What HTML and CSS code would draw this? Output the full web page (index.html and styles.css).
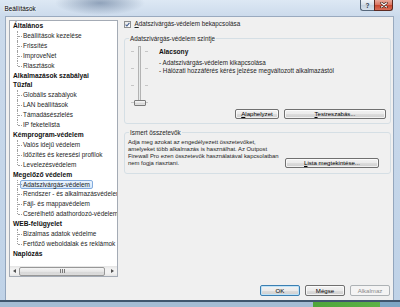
FILE: index.html
```html
<!DOCTYPE html>
<html lang="hu">
<head>
    <meta charset="UTF-8">
    <title>Beállítások</title>
    <link rel="stylesheet" href="styles.css">
</head>
<body>
<div class="window">
    <div class="titlebar">
        <span class="title">Beállítások</span>
        <div class="caption-buttons">
            <span class="cap help">?</span>
            <span class="cap close">
                <svg width="8" height="6" viewBox="0 0 8 6">
                    <path d="M1.5 1 L6.5 5 M6.5 1 L1.5 5" stroke="#3b1d17" stroke-width="2.4" stroke-linecap="round"/>
                    <path d="M1.5 1 L6.5 5 M6.5 1 L1.5 5" stroke="#ffffff" stroke-width="1.2" stroke-linecap="round"/>
                </svg>
            </span>
        </div>
    </div>

    <div class="client">
        <div class="main">
            <div class="tree-box">
                <ul class="tree">
                    <li class="cat"><span class="name">Általános</span>
                        <ul class="sub">
                            <li>Beállítások kezelése</li>
                            <li>Frissítés</li>
                            <li>ImproveNet</li>
                            <li>Riasztások</li>
                        </ul>
                    </li>
                    <li class="cat"><span class="name">Alkalmazások szabályai</span></li>
                    <li class="cat"><span class="name">Tűzfal</span>
                        <ul class="sub">
                            <li>Globális szabályok</li>
                            <li>LAN beállítások</li>
                            <li>Támadásészlelés</li>
                            <li>IP feketelista</li>
                        </ul>
                    </li>
                    <li class="cat"><span class="name">Kémprogram-védelem</span>
                        <ul class="sub">
                            <li>Valós idejű védelem</li>
                            <li>Időzítés és keresési profilok</li>
                            <li>Levelezésvédelem</li>
                        </ul>
                    </li>
                    <li class="cat"><span class="name">Megelőző védelem</span>
                        <ul class="sub">
                            <li><span class="selected">Adatszivárgás-védelem</span></li>
                            <li>Rendszer - és alkalmazásvédelem</li>
                            <li>Fájl- és mappavédelem</li>
                            <li>Cserélhető adathordozó-védelem</li>
                        </ul>
                    </li>
                    <li class="cat"><span class="name">WEB-felügyelet</span>
                        <ul class="sub">
                            <li>Bizalmas adatok védelme</li>
                            <li>Fertőző weboldalak és reklámok</li>
                        </ul>
                    </li>
                    <li class="cat"><span class="name">Naplózás</span></li>
                </ul>
                <div class="hscroll">
                    <span class="arrow"><i class="tri-left"></i></span>
                    <span class="thumb"><i class="grip"></i></span>
                    <span class="track-rest"></span>
                    <span class="arrow"><i class="tri-right"></i></span>
                </div>
            </div>

            <div class="panel">
                <label class="check-row">
                    <span class="checkbox">
                        <svg width="5" height="5" viewBox="0 0 5 5">
                            <path d="M0.6 2.6 L1.9 4 L4.4 0.8" fill="none" stroke="#3f5a8c" stroke-width="1.1"/>
                        </svg>
                    </span>
                    <span><u>A</u>datszivárgás-védelem bekapcsolása</span>
                </label>

                <fieldset class="group level">
                    <legend>Adatszivárgás-védelem szintje</legend>
                    <div class="level-body">
                        <div class="slider">
                            <div class="ticks"><i></i><i></i><i></i><i></i></div>
                            <div class="track"></div>
                            <div class="ticks"><i></i><i></i><i></i><i></i></div>
                            <span class="slider-thumb"></span>
                        </div>
                        <div class="level-text">
                            <div class="level-name">Alacsony</div>
                            <p class="level-desc">
                                - Adatszivárgás-védelem kikapcsolása<br>
                                - Hálózati hozzáférés kérés jelzése megváltozott alkalmazástól
                            </p>
                        </div>
                    </div>
                    <div class="group-buttons">
                        <button class="btn btn-reset"><u>A</u>laphelyzet</button>
                        <button class="btn btn-custom"><u>T</u>estreszabás...</button>
                    </div>
                </fieldset>

                <fieldset class="group known">
                    <legend>Ismert összetevők</legend>
                    <div class="known-body">
                        <p class="known-text">
                            Adja meg azokat az engedélyezett összetevőket,<br>
                            amelyeket több alkalmazás is használhat. Az Outpost<br>
                            Firewall Pro ezen összetevők használatával kapcsolatban<br>
                            nem fogja riasztani.
                        </p>
                        <button class="btn btn-list"><u>L</u>ista megtekintése...</button>
                    </div>
                </fieldset>
            </div>
        </div>

        <div class="footer">
            <button class="btn btn-footer btn-default">OK</button>
            <button class="btn btn-footer">Mégse</button>
            <button class="btn btn-footer" disabled>Alkalmaz</button>
        </div>
    </div>

    <div class="frame-bottom"></div>
</div>
</body>
</html>
```

FILE: styles.css
```css
:root {
    --text: #1e1e1e;
    --client-bg: #f0f0f0;
    --group-border: #d5dfe5;
    --tree-line: #a0a0a0;
}

* {
    box-sizing: border-box;
}

body {
    margin: 0;
    font-family: "Liberation Sans", Arial, sans-serif;
    font-size: 6.3px;
    color: var(--text);
}

.window {
    width: 400px;
    height: 307px;
    display: flex;
    flex-direction: column;
    overflow: hidden;
    background:
        radial-gradient(ellipse 45px 12px at 100px 3px, rgba(70, 95, 130, 0.5), rgba(70, 95, 130, 0)),
        linear-gradient(to bottom, #dde8f4 0, #cbdaeb 17px, #bfd2e7 100%);
}

/* title bar */

.titlebar {
    height: 17px;
    display: flex;
    align-items: flex-start;
}

.title {
    padding: 4.5px 0 0 4.5px;
    line-height: 7px;
    font-size: 6.4px;
    color: #000;
    text-shadow: 0 0 3px #fff, 0 0 2px #fff;
}

.caption-buttons {
    margin-left: auto;
    margin-right: 7px;
    display: flex;
}

.cap {
    height: 11px;
    display: flex;
    align-items: center;
    justify-content: center;
    border: 1px solid #56677b;
    border-top: none;
}

.help {
    width: 14px;
    border-right: none;
    border-radius: 0 0 0 3px;
    background: linear-gradient(to bottom, #eef3f8, #d3dee9 50%, #c3d1df 50%, #d6e1ec);
    color: #2b3a4d;
    font-weight: bold;
    font-size: 6.5px;
}

.close {
    width: 19px;
    border-color: #5c2a22;
    border-radius: 0 0 3px 0;
    background: linear-gradient(to bottom, #e9a99b, #d9725f 50%, #c7442c 50%, #d9705a);
}

/* client area */

.client {
    flex: 1;
    margin: 0 7px 0 6px;
    padding: 3px 2px 4px 3px;
    background: var(--client-bg);
    box-shadow: 0 0 0 1px rgba(60, 80, 110, 0.35);
    display: flex;
    flex-direction: column;
}

.main {
    display: flex;
    gap: 6px;
    height: 257px;
}

/* tree */

.tree-box {
    width: 109px;
    flex-shrink: 0;
    border: 1px solid #a4abb5;
    background: #fff;
    display: flex;
    flex-direction: column;
}

.tree {
    flex: 1;
    margin: 0;
    padding: 0 0 0 3px;
    list-style: none;
    overflow: hidden;
    white-space: nowrap;
    font-size: 6.45px;
    line-height: 9.9px;
}

.cat .name {
    font-weight: bold;
    font-size: 6.7px;
    color: #111;
}

.sub {
    list-style: none;
    margin: 0;
    padding: 0;
}

.sub li {
    position: relative;
    padding-left: 10px;
}

.sub li::before {
    content: "";
    position: absolute;
    left: 4px;
    top: 0;
    bottom: 0;
    border-left: 1px dotted var(--tree-line);
}

.sub li:last-child::before {
    bottom: 50%;
}

.sub li::after {
    content: "";
    position: absolute;
    left: 5px;
    top: 50%;
    width: 4px;
    border-top: 1px dotted var(--tree-line);
}

.selected {
    display: inline-block;
    margin-left: -3px;
    padding: 0 2px;
    line-height: 7.5px;
    border: 1px solid #84acdd;
    border-radius: 2px;
    background: linear-gradient(to bottom, #ebf4fd, #d5e7fb);
}

.hscroll {
    height: 10px;
    display: flex;
    background: linear-gradient(to bottom, #e4e4e4, #f2f2f2 30%, #f2f2f2 70%, #e4e4e4);
}

.arrow {
    width: 9px;
    display: flex;
    align-items: center;
    justify-content: center;
}

.tri-left,
.tri-right {
    width: 0;
    height: 0;
    border-top: 2.5px solid transparent;
    border-bottom: 2.5px solid transparent;
}

.tri-left {
    border-right: 3px solid #505050;
}

.tri-right {
    border-left: 3px solid #505050;
}

.thumb {
    width: 86px;
    margin: 0.5px 0;
    border: 1px solid #979797;
    border-radius: 2px;
    background: linear-gradient(to bottom, #f5f5f5, #e6e6e6 50%, #d8d8d8 50%, #dcdcdc);
    display: flex;
    align-items: center;
    justify-content: center;
}

.grip {
    width: 5px;
    height: 4px;
    background: repeating-linear-gradient(to right, #7a7a7a 0 1px, transparent 1px 2px);
}

.track-rest {
    flex: 1;
}

/* right panel */

.panel {
    flex: 1;
    display: flex;
    flex-direction: column;
}

.check-row {
    display: flex;
    align-items: center;
    gap: 3.5px;
    height: 8px;
    line-height: 8px;
}

.checkbox {
    width: 7px;
    height: 7px;
    border: 1px solid #8e8f8f;
    background: linear-gradient(to bottom right, #e6e6e6, #ffffff);
    display: flex;
    align-items: center;
    justify-content: center;
}

.group {
    margin: 0;
    padding: 0;
    min-inline-size: 0;
    border: 1px solid var(--group-border);
    border-radius: 3px;
}

.group legend {
    margin-left: 4px;
    padding: 0 1px;
    line-height: 7px;
}

.level {
    margin-top: 6.5px;
}

.level-body {
    display: flex;
    padding: 4.5px 0 0 6px;
}

.slider {
    position: relative;
    display: flex;
    gap: 4px;
    height: 61px;
}

.ticks {
    width: 3px;
    padding: 5px 0 4px;
    display: flex;
    flex-direction: column;
    justify-content: space-between;
}

.ticks i {
    height: 1px;
    background: #c6c6c6;
}

.track {
    width: 3px;
    height: 57px;
    border: 1px solid #b3b3b3;
    background: #e7eaea;
}

.slider-thumb {
    position: absolute;
    left: 3px;
    top: 54px;
    width: 12px;
    height: 6px;
    border: 1px solid #7a7a7a;
    border-radius: 1px;
    background: linear-gradient(to bottom, #f7f7f7, #e3e3e3 50%, #d5d5d5 50%, #e2e2e2);
}

.level-text {
    margin-left: 11px;
    padding-top: 0.5px;
    white-space: nowrap;
}

.level-name {
    font-weight: bold;
    font-size: 6.6px;
    line-height: 9px;
    color: #111;
}

.level-desc {
    margin: 3.5px 0 0;
    line-height: 8px;
}

.group-buttons {
    display: flex;
    justify-content: flex-end;
    gap: 5px;
    padding: 2px 4px 4px 0;
}

.known {
    margin-top: 4.5px;
}

.known-body {
    display: flex;
    align-items: flex-end;
    padding: 3.5px 0 6px 3px;
}

.known-text {
    width: 152px;
    margin: 0;
    font-size: 5.9px;
    line-height: 7px;
    white-space: nowrap;
}

/* buttons */

.btn {
    height: 10px;
    padding: 0;
    font-family: inherit;
    font-size: 6.1px;
    line-height: 8px;
    color: #000;
    border: 1px solid #707070;
    border-radius: 2px;
    background: linear-gradient(to bottom, #f2f2f2, #ebebeb 50%, #dddddd 50%, #cfcfcf);
    box-shadow: inset 0 0 0 1px rgba(255, 255, 255, 0.7);
}

.btn-reset {
    width: 44px;
}

.btn-custom {
    width: 102px;
}

.btn-list {
    width: 94px;
    margin: 0 0 -1px 5px;
}

.footer {
    display: flex;
    justify-content: flex-end;
    gap: 5px;
    margin: 8px 1px 0 0;
}

.btn-footer {
    width: 40px;
    height: 11px;
}

.btn-default {
    border-color: #3c7fb1;
    box-shadow: inset 0 0 0 1px #bfe3f8;
}

.btn:disabled {
    color: #8b8b8b;
    border-color: #adb2b5;
    background: #f4f4f4;
    box-shadow: none;
}

/* desktop seen through the bottom frame */

.frame-bottom {
    height: 7px;
    border-top: 2px solid #3f566e;
    background: linear-gradient(to right, #a4bdd4 0, #a4bdd4 313px, #4fa63a 313px, #5cb146 380px, #7da6c4 380px);
}
```
